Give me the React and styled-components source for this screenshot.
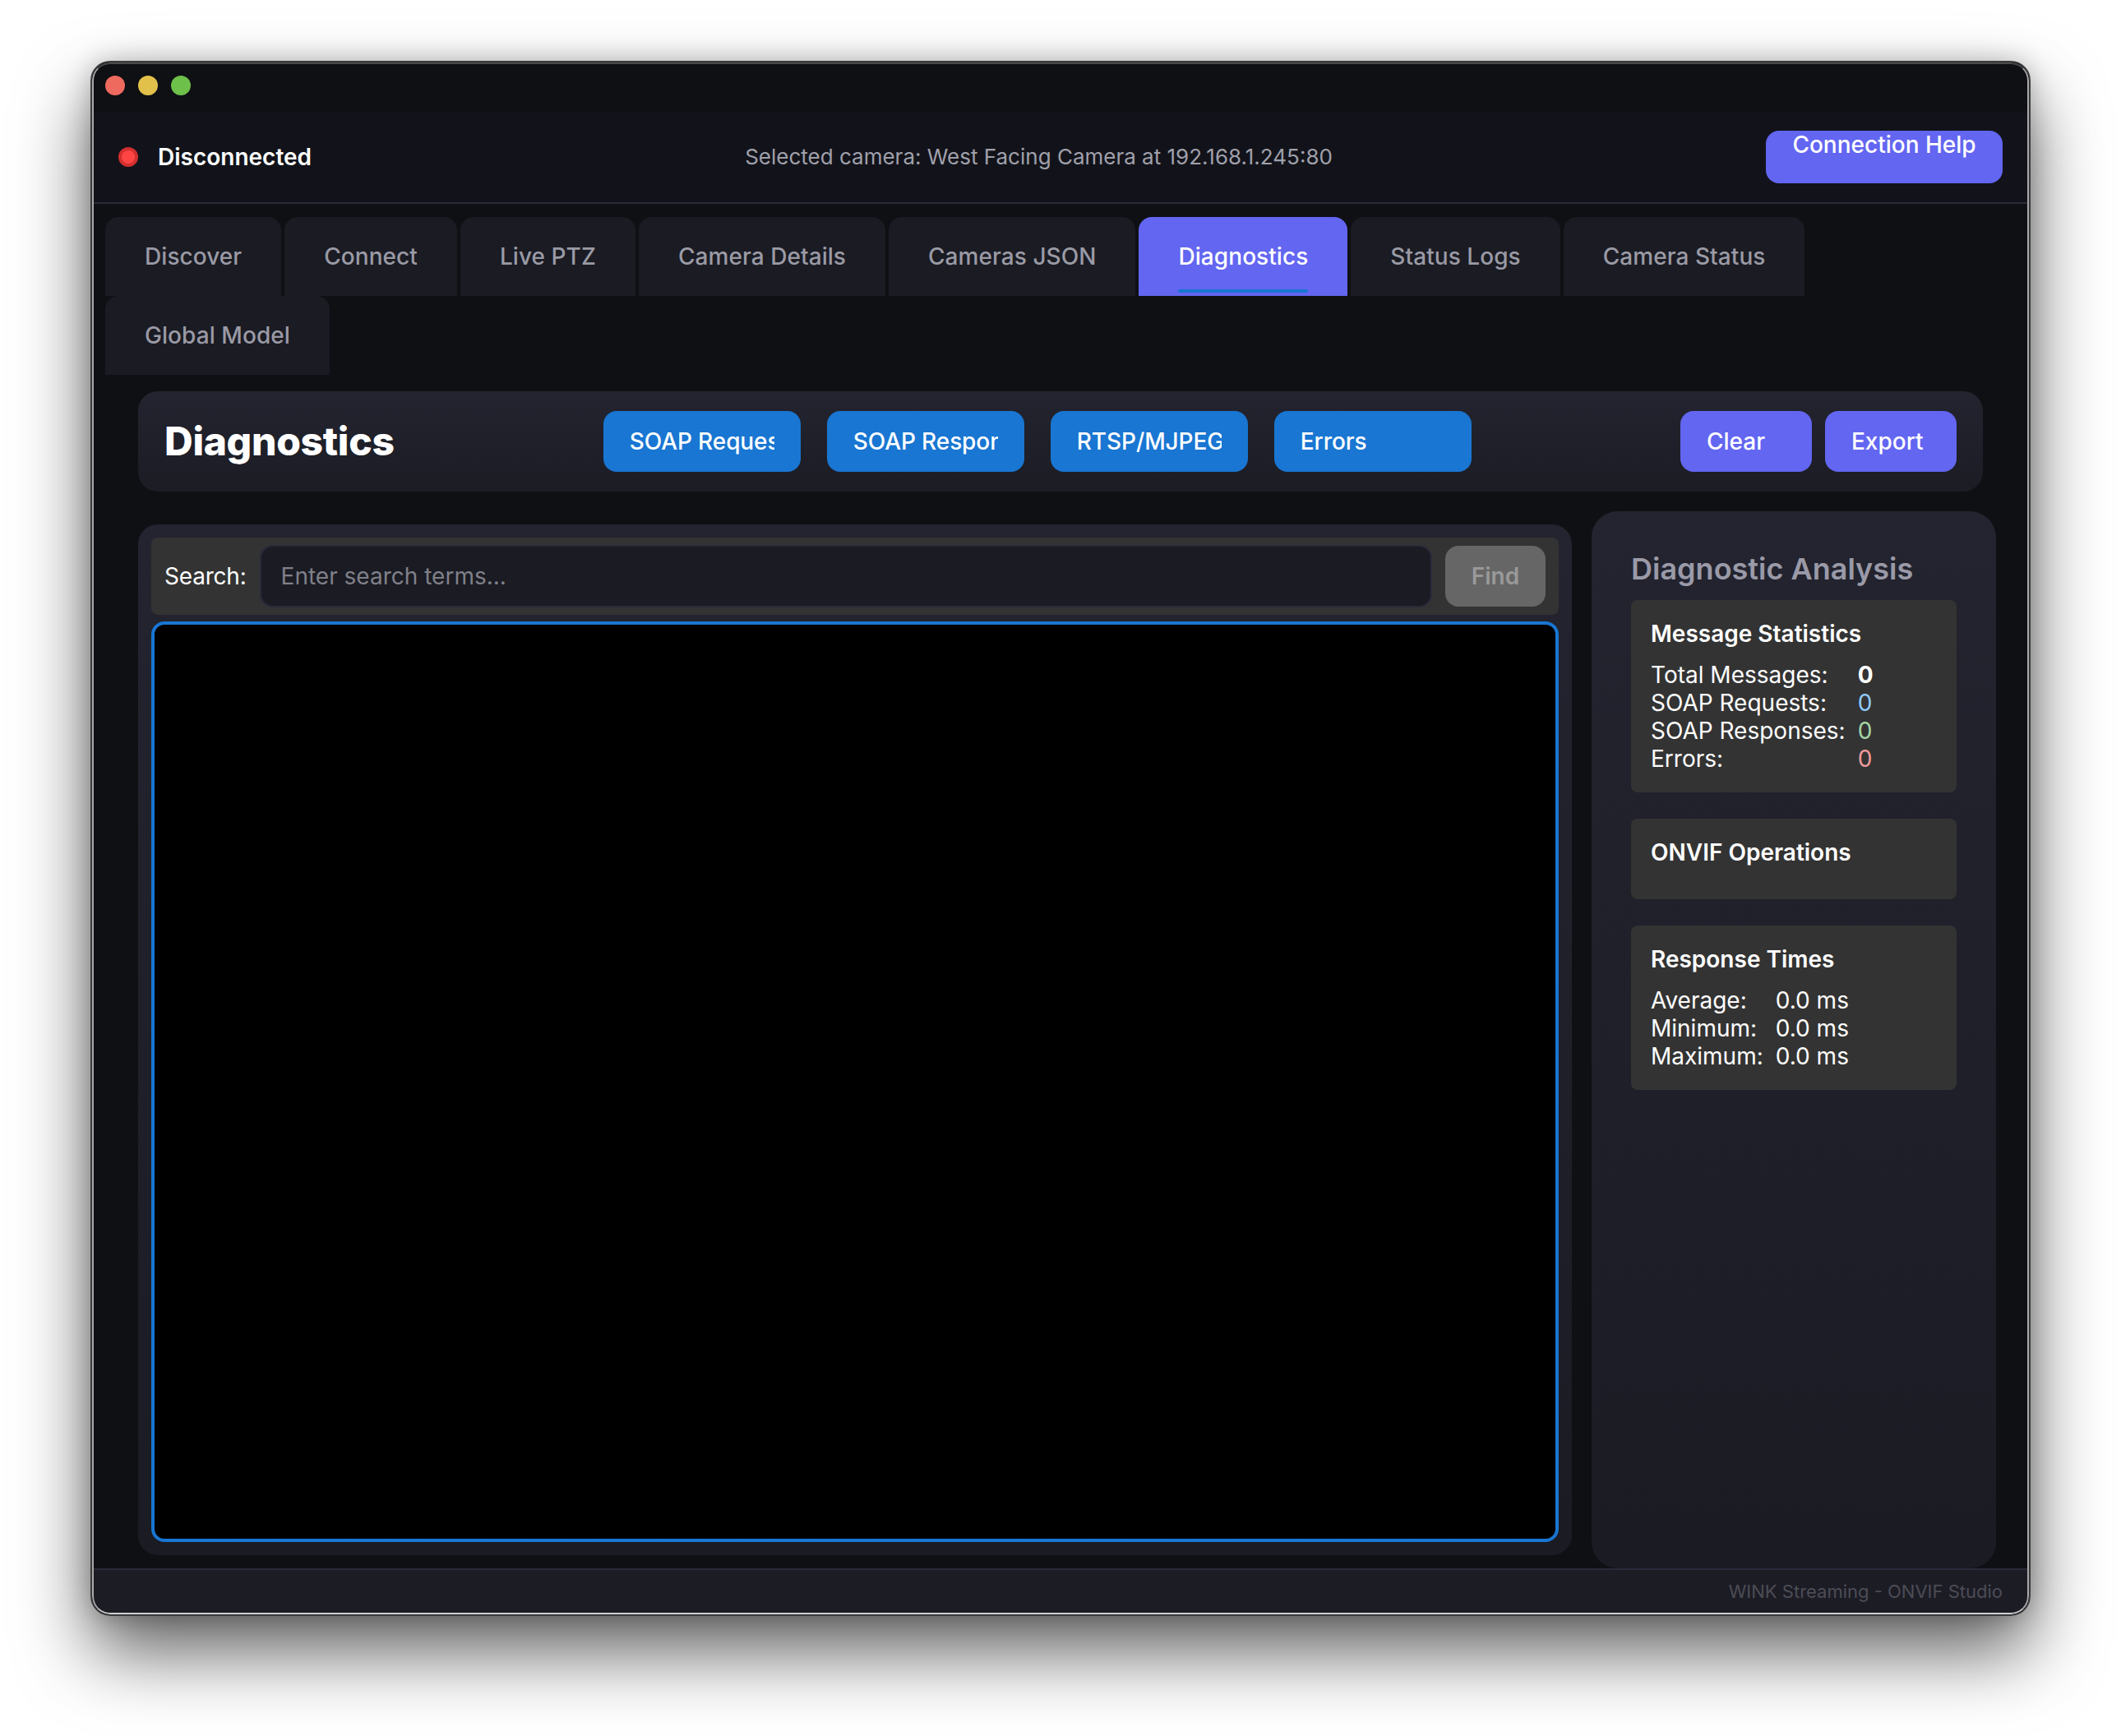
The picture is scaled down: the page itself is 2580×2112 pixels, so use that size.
import React from "react";
import styled, { createGlobalStyle } from "styled-components";

const Global = createGlobalStyle`
  html, body { margin: 0; padding: 0; background: #fff; }
  body { width: 2580px; height: 2112px; overflow: hidden; font-family: Inter, "Liberation Sans", sans-serif; }
  * { box-sizing: border-box; }
`;
const Stage = styled.div`
  width: 2580px; height: 2112px; padding: 74px 110px 146px;
  background: #fff;
`;
const Win = styled.div`
  position: relative;
  width: 2360px; height: 1892px;
  border: 2px solid #3a3a3c;
  border-radius: 24px;
  background: #0f1014;
  display: flex; flex-direction: column;
  overflow: hidden;
`;
const Shadow = styled.div`
  width: 2360px; height: 1892px; border-radius: 24px;
  box-shadow: 0 44px 88px rgba(0,0,0,.62), 0 0 30px rgba(0,0,0,.22);
`;
const Rim = styled.div`
  position: absolute; inset: 0; border-radius: 22px; pointer-events: none;
  border: 2px solid transparent;
  border-bottom-color: #cfcfcf; border-left-color: #a8a8a8; border-right-color: #a8a8a8; border-top-color: #4a4a4c;
`;
const TitleBar = styled.div`
  height: 60px; flex: none; display: flex; align-items: center; gap: 16px; padding: 0 0 4px 16px;
  background: #0f1014;
`;
const Light = styled.span`
  width: 24px; height: 24px; border-radius: 50%; background: ${p => p.$c};
`;
const Header = styled.header`
  height: 112px; flex: none; display: flex; align-items: center; justify-content: space-between;
  padding: 0 32px; background: #12131a; border-bottom: 2px solid #2a2a3a;
`;
const Status = styled.div`display: flex; align-items: center; gap: 24px;`;
const Dot = styled.span`
  width: 24px; height: 24px; border-radius: 50%; background: #ff4444; border: 4px solid #d32f2f;
`;
const StatusText = styled.span`font-size: 28px; font-weight: 600; color: #fff;`;
const Selected = styled.span`font-size: 26px; line-height: 32px; margin-top: -1px; color: #a0a0ab;`;
const HelpButton = styled.button`
  width: 288px; height: 64px; border: 0; border-radius: 16px; background: #6366f1; color: #fff;
  font: 500 28px Inter, sans-serif; padding: 0; display: flex; justify-content: center; align-items: flex-start;
  line-height: 34px;
`;
const Tabs = styled.nav`
  flex: none; display: flex; flex-wrap: wrap; column-gap: 4px; padding: 16px 16px 0;
`;
const Tab = styled.div`
  position: relative; height: 96px; padding: 0 48px; display: flex; align-items: center;
  border-radius: 16px 16px 0 0;
  background: ${p => p.$active ? "#6366f1" : "#1a1b23"};
  color: ${p => p.$active ? "#fff" : "#9a9aa5"};
  font-size: 28px; font-weight: 500; letter-spacing: 0.06px;
  ${p => p.$active && `
    &::after { content: ""; position: absolute; left: 48px; right: 48px; bottom: 4px; height: 4px; background: #1976d2; border-radius: 2px; }
  `}
`;
const Main = styled.main`
  flex: 1; min-height: 0; display: flex; flex-direction: column; padding-top: 20px;
`;
const Toolbar = styled.div`
  flex: none; height: 122px; margin: 0 56px; padding: 0 32px; display: flex; align-items: center; justify-content: space-between;
  border-radius: 24px; background: linear-gradient(180deg, #23242f, #1b1c24);
`;
const PageTitle = styled.h1`margin: -2px 0 0; font-size: 48px; font-weight: 800; color: #fff; letter-spacing: -0.3px;`;
const ButtonGroup = styled.div`display: flex; gap: ${p => p.$gap}px;`;
const FilterButton = styled.button`
  width: 240px; height: 74px; border: 0; border-radius: 16px; background: #1976d2; color: #fff;
  font: 500 28px Inter, sans-serif; letter-spacing: -0.1px; padding: 0 32px; text-align: left;
`;
const Clip = styled.span`display: block; overflow: hidden; white-space: nowrap;`;
const ActionButton = styled.button`
  width: 160px; height: 74px; border: 0; border-radius: 16px; background: #6366f1; color: #fff;
  font: 500 28px Inter, sans-serif; padding: 0 32px; text-align: left;
`;
const Columns = styled.div`
  flex: 1; min-height: 0; display: flex; margin-top: 24px; padding-right: 40px;
`;
const LogPanel = styled.section`
  width: 1744px; margin: 16px 0 16px 56px; padding: 16px; display: flex; flex-direction: column; gap: 8px;
  border-radius: 24px; background: linear-gradient(180deg, #23242f, #1a1b23);
`;
const SearchBar = styled.div`
  flex: none; height: 94px; padding: 0 16px; display: flex; align-items: center; gap: 16px;
  background: #333; border-radius: 8px;
`;
const SearchLabel = styled.label`font-size: 28px; color: #fff; letter-spacing: -0.2px;`;
const SearchInput = styled.input`
  flex: 1; height: 76px; padding: 0 24px; border: 2px solid #2a2a3a; border-radius: 16px; background: #1a1b23;
  color: #fff; font: 400 28px Inter, sans-serif; outline: none;
  &::placeholder { color: #808089; opacity: 1; }
`;
const FindButton = styled.button`
  width: 122px; height: 74px; border: 0; border-radius: 16px; background: #666; color: #999;
  font: 600 28px Inter, sans-serif; padding: 0;
`;
const LogView = styled.div`
  flex: 1; min-height: 0; background: #000; border: 4px solid #1976d2; border-radius: 16px;
`;
const Side = styled.aside`
  width: 492px; margin-left: 24px; padding: 48px 48px 0; display: flex; flex-direction: column; align-items: stretch;
  border-radius: 32px; background: linear-gradient(180deg, #23242f, #1a1b23);
`;
const SideTitle = styled.h2`margin: 0 0 16px; font-size: 36px; line-height: 44px; font-weight: 600; color: #9a9aa8;`;
const Card = styled.div`
  padding: 24px; margin-bottom: 32px; background: #333; border-radius: 8px;
`;
const CardTitle = styled.h3`margin: 0 0 16px; font-size: 28px; line-height: 34px; font-weight: 600; color: #fff;`;
const StatGrid = styled.div`
  display: grid; grid-template-columns: auto 1fr; column-gap: 15px; font-size: 28px; line-height: 34px; color: #fff;
`;
const Val = styled.span`color: ${p => p.$c || "#fff"}; font-weight: ${p => p.$bold ? 700 : 400};`;
const Footer = styled.footer`
  flex: none; height: 56px; padding: 0 32px 2px; display: flex; align-items: center; justify-content: flex-end;
  background: #1c1c25; border-top: 2px solid #2a2a3a;
  font-size: 22px; color: #4c4c55;
`;

const tabs = ["Discover","Connect","Live PTZ","Camera Details","Cameras JSON","Diagnostics","Status Logs","Camera Status","Global Model"];

export default function App() {
  return (
    <Stage>
      <Global />
      <Shadow>
        <Win>
          <TitleBar>
            <Light $c="#ee6a5f" /><Light $c="#e2c14b" /><Light $c="#6dc04a" />
          </TitleBar>
          <Header>
            <Status><Dot /><StatusText>Disconnected</StatusText></Status>
            <Selected>Selected camera: West Facing Camera at 192.168.1.245:80</Selected>
            <HelpButton>Connection Help</HelpButton>
          </Header>
          <Tabs>
            {tabs.map(t => <Tab key={t} $active={t === "Diagnostics"}>{t}</Tab>)}
          </Tabs>
          <Main>
            <Toolbar>
              <PageTitle>Diagnostics</PageTitle>
              <ButtonGroup $gap={32}>
                {["SOAP Requests","SOAP Responses","RTSP/MJPEG","Errors"].map(b => <FilterButton key={b}><Clip>{b}</Clip></FilterButton>)}
              </ButtonGroup>
              <ButtonGroup $gap={16}>
                <ActionButton>Clear</ActionButton>
                <ActionButton>Export</ActionButton>
              </ButtonGroup>
            </Toolbar>
            <Columns>
              <LogPanel>
                <SearchBar>
                  <SearchLabel>Search:</SearchLabel>
                  <SearchInput placeholder="Enter search terms..." />
                  <FindButton>Find</FindButton>
                </SearchBar>
                <LogView />
              </LogPanel>
              <Side>
                <SideTitle>Diagnostic Analysis</SideTitle>
                <Card>
                  <CardTitle>Message Statistics</CardTitle>
                  <StatGrid>
                    <span>Total Messages:</span><Val $bold>0</Val>
                    <span>SOAP Requests:</span><Val $c="#90caf9">0</Val>
                    <span>SOAP Responses:</span><Val $c="#a5d6a7">0</Val>
                    <span>Errors:</span><Val $c="#ef9a9a">0</Val>
                  </StatGrid>
                </Card>
                <Card>
                  <CardTitle>ONVIF Operations</CardTitle>
                </Card>
                <Card>
                  <CardTitle>Response Times</CardTitle>
                  <StatGrid>
                    <span>Average:</span><Val>0.0 ms</Val>
                    <span>Minimum:</span><Val>0.0 ms</Val>
                    <span>Maximum:</span><Val>0.0 ms</Val>
                  </StatGrid>
                </Card>
              </Side>
            </Columns>
          </Main>
          <Footer>WINK Streaming - ONVIF Studio</Footer>
          <Rim />
        </Win>
      </Shadow>
    </Stage>
  );
}
